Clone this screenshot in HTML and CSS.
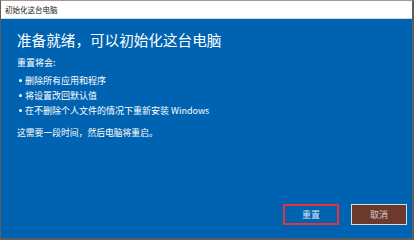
FILE: index.html
```html
<!DOCTYPE html>
<html lang="zh-CN">
<head>
<meta charset="utf-8">
<link rel="stylesheet" href="styles.css">
</head>
<body>
<div class="dialog">
  <div class="titlebar">初始化这台电脑</div>
  <div class="content">
    <h1 class="heading">准备就绪，可以初始化这台电脑</h1>
    <p class="sub">重置将会:</p>
    <ul class="list">
      <li>删除所有应用和程序</li>
      <li>将设置改回默认值</li>
      <li>在不删除个人文件的情况下重新安装 Windows</li>
    </ul>
    <p class="note">这需要一段时间，然后电脑将重启。</p>
    <div class="actions">
      <button class="btn btn-reset">重置</button>
      <button class="btn btn-cancel">取消</button>
    </div>
  </div>
</div>
</body>
</html>
```

FILE: styles.css
```css
html, body {
  margin: 0;
  padding: 0;
  background: #ffffff;
}
body {
  font-family: "Noto Sans CJK SC", "Noto Sans", sans-serif;
}
.dialog {
  width: 414px;
  height: 240px;
  box-sizing: border-box;
  border-top: 1px solid #ab978f;
  border-left: 1px solid #5e5e60;
  border-right: 2px solid #5e5e60;
  border-bottom: 2px solid #5e5e60;
  display: flex;
  flex-direction: column;
  background: #0063b1;
}
.titlebar {
  height: 17px;
  line-height: 17px;
  background: #ffffff;
  border-bottom: 1px solid #c9dcef;
  color: #222222;
  font-size: 7.5px;
  padding-left: 4px;
  flex: none;
}
.content {
  flex: 1;
  display: flex;
  flex-direction: column;
  padding: 11px 5px 13px 16px;
  color: #ffffff;
}
.heading {
  margin: 0;
  font-size: 14.6px;
  font-weight: normal;
  line-height: 20px;
}
.sub {
  margin: 6px 0 0;
  font-size: 9px;
  line-height: 14px;
}
.list {
  list-style: none;
  margin: 3px 0 0;
  padding: 0;
}
.list li {
  font-size: 9px;
  line-height: 15px;
  position: relative;
  padding-left: 8px;
}
.list li::before {
  content: "";
  position: absolute;
  left: 2px;
  top: 6px;
  width: 3px;
  height: 3px;
  border-radius: 50%;
  background: #ffffff;
}
.note {
  margin: 8px 0 0;
  font-size: 8.8px;
  line-height: 14px;
}
.actions {
  margin-top: auto;
  display: flex;
  justify-content: flex-end;
  gap: 12px;
}
.btn {
  width: 56px;
  height: 21px;
  box-sizing: border-box;
  font-family: "Noto Sans CJK SC", sans-serif;
  font-size: 9px;
  padding: 0;
  margin: 0;
}
.btn-reset {
  background: transparent;
  border: 2px solid #e3343b;
  color: #d6e6f5;
}
.btn-cancel {
  background: #6b3a2d;
  border: 1px solid #dcdcdc;
  color: #d9c9c4;
}
```
